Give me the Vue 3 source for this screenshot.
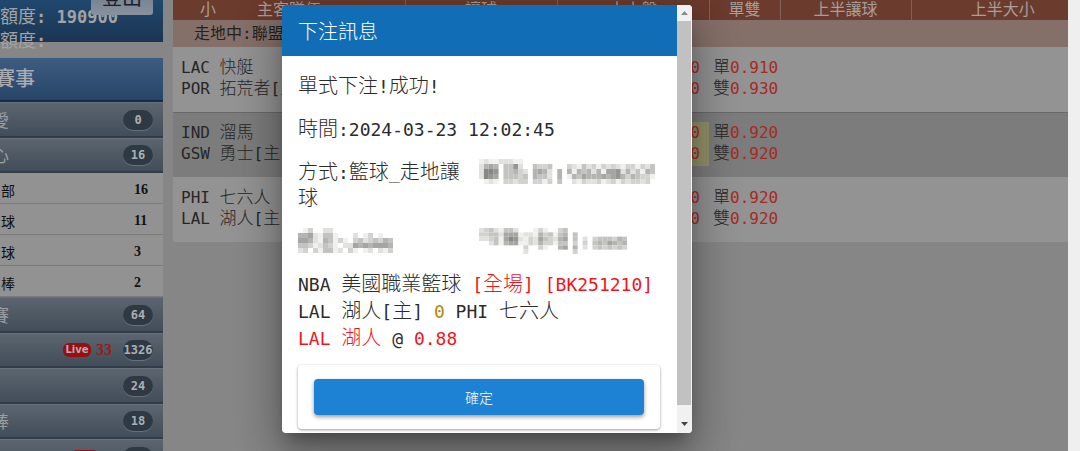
<script setup>
import { h } from 'vue'

/* Sets Latin runs in the monospaced face and CJK runs in the CJK face. */
const Mix = ({ text }) =>
  text
    .split(/([\u2e80-\u9fff]+)/)
    .filter(Boolean)
    .map((run) => h('span', { class: /[\u2e80-\u9fff]/.test(run) ? 'cjk' : 'latin' }, run))
Mix.props = ['text']

const menuTop = [
  { name: '愛', count: '0' },
  { name: '心', count: '16' },
]
const subMenu = [
  { name: '部', count: '16' },
  { name: '球', count: '11' },
  { name: '球', count: '3' },
  { name: '棒', count: '2' },
]
const menuBottom = [
  { name: '賽', count: '64' },
  { name: '', count: '1326', live: '33' },
  { name: '', count: '24' },
  { name: '棒', count: '18' },
  { name: '', count: '', live: '\u2007' },
]
const games = [
  { away: 'LAC 快艇', home: 'POR 拓荒者[主]', odd: '0.910', even: '0.930' },
  { away: 'IND 溜馬', home: 'GSW 勇士[主]', odd: '0.920', even: '0.920', alt: true },
  { away: 'PHI 七六人', home: 'LAL 湖人[主]', odd: '0.920', even: '0.920' },
]

/* Pixelated masks: each digit is the darkness of one cell. */
const masks = {
  order: [
    '121122211000000000000000000000000000',
    '256504472004334000321423132321331324',
    '288704453205652050515452516672524154',
    '287604443405442050154655565675354331',
    '012103323303313040021322312313233230',
  ],
  stake: [
    '0130022000000000000',
    '5562144100020130100',
    '6652154131034234354',
    '4431243102265656665',
    '2303144120310120213',
  ],
  payout: [
    '234214420001310034000000000000',
    '334426661221534145040000000000',
    '223416872132643256040203444354',
    '002415661132533144030304546545',
    '000000000300310056050203434343',
    '000000000200000000030000000000',
  ],
}
const cells = (rows) =>
  rows.flatMap((row, y) =>
    [...row].map((d, x) => ({ x: x * 5, y: y * 5, d: Number(d) })).filter((c) => c.d > 0)
  )
const shade = (d) => {
  const v = 255 - d * 15
  return `rgb(${v},${v},${v - 2})`
}
</script>

<template>
  <div class="screen">
    <aside class="sidebar">
      <section class="account">
        <p><Mix text="額度: 190900" /></p>
        <p><Mix text="額度:" /></p>
        <button class="logout" type="button">登出</button>
      </section>
      <h2 class="side-title">賽事</h2>
      <nav>
        <a v-for="m in menuTop" :key="m.name" class="item" href="#">
          <span class="name">{{ m.name }}</span>
          <span class="badge">{{ m.count }}</span>
        </a>
        <a v-for="(m, i) in subMenu" :key="'s' + i" class="sub" href="#">
          <span>{{ m.name }}</span>
          <b>{{ m.count }}</b>
        </a>
        <a v-for="(m, i) in menuBottom" :key="'b' + i" class="item" href="#">
          <span class="name">{{ m.name }}</span>
          <span v-if="m.live" class="live">Live</span>
          <span v-if="m.live" class="live-count">{{ m.live }}</span>
          <span class="badge">{{ m.count }}</span>
        </a>
      </nav>
    </aside>

    <main class="board">
      <table>
        <colgroup>
          <col class="c-team" /><col class="c-line" /><col class="c-line" />
          <col class="c-parity" /><col class="c-half" /><col />
        </colgroup>
        <thead>
          <tr>
            <th class="team-head"><span>小</span><span>主客隊伍</span></th>
            <th>讓球</th>
            <th>大小盤</th>
            <th>單雙</th>
            <th>上半讓球</th>
            <th class="last">上半大小</th>
          </tr>
        </thead>
        <tbody>
          <tr class="league">
            <td colspan="6"><Mix text="走地中:聯盟" /></td>
          </tr>
          <tr v-for="g in games" :key="g.away" class="game" :class="{ alt: g.alt }">
            <td class="team">
              <div><Mix :text="g.away" /></div>
              <div><Mix :text="g.home" /></div>
            </td>
            <td></td>
            <td class="total"><div class="picks"><div>0</div><div>0</div></div></td>
            <td class="parity">
              <div><span class="cjk">單</span><span class="price">{{ g.odd }}</span></div>
              <div><span class="cjk">雙</span><span class="price">{{ g.even }}</span></div>
            </td>
            <td></td>
            <td></td>
          </tr>
        </tbody>
      </table>
    </main>
    <div class="page-track"></div>

    <div class="dialog" role="dialog" aria-labelledby="dialog-title">
      <div class="dialog-main">
        <h1 id="dialog-title">下注訊息</h1>
        <div class="dialog-body">
          <p><Mix text="單式下注!成功!" /></p>
          <p><Mix text="時間:2024-03-23 12:02:45" /></p>
          <div class="pair">
            <p><Mix text="方式:籃球_走地讓球" /></p>
            <svg class="mask" width="176" height="25" viewBox="0 0 180 25" preserveAspectRatio="none" aria-hidden="true">
              <rect v-for="(c, i) in cells(masks.order)" :key="i" :x="c.x" :y="c.y" width="5" height="5" :fill="shade(c.d)" />
            </svg>
          </div>
          <div class="pair">
            <svg class="mask" width="95" height="25" viewBox="0 0 95 25" aria-hidden="true">
              <rect v-for="(c, i) in cells(masks.stake)" :key="i" :x="c.x" :y="c.y" width="5" height="5" :fill="shade(c.d)" />
            </svg>
            <svg class="mask" width="148" height="26" viewBox="0 0 150 30" preserveAspectRatio="none" aria-hidden="true">
              <rect v-for="(c, i) in cells(masks.payout)" :key="i" :x="c.x" :y="c.y" width="5" height="5" :fill="shade(c.d)" />
            </svg>
          </div>
          <div class="bet">
            <div><Mix text="NBA 美國職業籃球 " /><span class="red"><Mix text="[全場] [BK251210]" /></span></div>
            <div><Mix text="LAL 湖人[主] " /><span class="gold"><Mix text="0" /></span><Mix text=" PHI 七六人" /></div>
            <div><span class="red"><Mix text="LAL 湖人" /></span><Mix text=" @ " /><span class="red"><Mix text="0.88" /></span></div>
          </div>
          <div class="actions"><button type="button">確定</button></div>
        </div>
      </div>
      <div class="scrollbar" aria-hidden="true">
        <svg width="14" height="16" viewBox="0 0 14 16"><path d="M4 10h7L7.500 6z" fill="#8b8b8b" /></svg>
        <div class="thumb"></div>
        <svg width="14" height="28" viewBox="0 0 14 28"><path d="M4 17h7l-3.500 4z" fill="#444" /></svg>
      </div>
    </div>
  </div>
</template>

<style>
body {
  margin: 0;
  background: #868686;
}
.latin {
  font-family: "DejaVu Sans Mono", "Liberation Mono", monospace;
  font-size: 18px;
  line-height: 1;
  white-space: pre-wrap;
}
.cjk {
  font-family: "Noto Sans CJK TC", sans-serif;
  font-weight: 300;
  line-height: 1;
}
</style>

<style scoped>
.screen {
  position: relative;
  display: flex;
  gap: 10px;
  height: 100vh;
  overflow: hidden;
  background: #868686;
  font-family: "DejaVu Sans Mono", "Noto Sans CJK TC", monospace;
}
p, h1, h2 {
  margin: 0;
}
a {
  color: inherit;
  text-decoration: none;
}

.sidebar {
  flex: 0 0 163px;
  overflow: hidden;
}
.account {
  position: relative;
  box-sizing: border-box;
  height: 42px;
  padding-top: 5px;
  margin-bottom: 16px;
  background: linear-gradient(#20486f, #1b3552);
  color: #a3a3a3;
  font-size: 18px;
  line-height: 24px;
}
.account p {
  height: 24px;
  white-space: nowrap;
}
.account :deep(.latin) {
  font-size: 17px;
  font-weight: bold;
}
.account :deep(.cjk) {
  font-weight: 400;
}
.logout {
  position: absolute;
  top: -15px;
  left: 91px;
  width: 62px;
  height: 30px;
  padding: 0 0 6px;
  border: 0;
  border-radius: 3px;
  background: linear-gradient(#6d7785, #8791a0);
  color: #17202e;
  font: 20px/24px "Noto Sans CJK TC", sans-serif;
}
.side-title {
  height: 42px;
  border-bottom: 2px solid #162c45;
  background: linear-gradient(#3d5c80, #264567);
  color: #a6acb2;
  font: 500 20px/40px "Noto Sans CJK TC", sans-serif;
  text-indent: -5px;
}
.item {
  display: flex;
  align-items: center;
  box-sizing: border-box;
  height: 36px;
  padding-right: 10px;
  border-top: 1px solid #68717b;
  border-bottom: 2px solid #323c47;
  background: linear-gradient(#5c656f, #414d59);
  color: #9b9fa3;
}
.item:nth-child(even) {
  height: 35px;
}
.name {
  flex: 1;
  font: 17px/24px "Noto Sans CJK TC", sans-serif;
  text-indent: -8px;
}
.badge {
  flex: 0 0 30px;
  height: 20px;
  border-radius: 10px;
  background: #2e3944;
  box-shadow: 0 1px 0 #66707a;
  color: #abafb3;
  font-size: 12px;
  font-weight: bold;
  line-height: 20px;
  text-align: center;
}
.live {
  width: 28px;
  height: 14px;
  margin-right: 5px;
  border-radius: 6px;
  background: #960f12;
  color: #b9a9a9;
  font: bold 10px/14px "DejaVu Sans", sans-serif;
  text-align: center;
}
.live-count {
  margin-right: 11px;
  color: #961c1f;
  font: bold 16px/20px "Liberation Serif", serif;
}
.sub {
  display: flex;
  justify-content: space-between;
  box-sizing: border-box;
  height: 31px;
  border-bottom: 1px solid #7b7b7b;
  background: #929292;
  color: #111;
  font: 14px/34px "Noto Sans CJK TC", sans-serif;
}
.sub span {
  padding-left: 1px;
}
.sub b {
  width: 29px;
  font: bold 14px/34px "Liberation Serif", serif;
}

.board {
  flex: 1;
}
table {
  width: 100%;
  border-collapse: collapse;
  table-layout: fixed;
}
.c-team { width: 232px; }
.c-line { width: 152px; }
.c-parity { width: 71px; }
.c-half { width: 131px; }
th {
  height: 20px;
  padding: 0;
  border-right: 1px solid #806159;
  background: #6b3b2d;
  color: #a89e9a;
  font: 16px/16px "Noto Sans CJK TC", sans-serif;
  vertical-align: top;
}
th.last {
  padding-left: 26px;
  border-right: 0;
}
.team-head {
  padding-left: 27px;
  text-align: left;
}
.team-head span + span {
  margin-left: 41px;
}
td {
  padding: 0;
  vertical-align: top;
}
.league td {
  height: 25px;
  padding-left: 21px;
  background: #857069;
  color: #222;
  font-size: 16px;
  line-height: 27px;
}
.league :deep(.cjk) {
  font-weight: 400;
}
.game {
  height: 65px;
  background: #939393;
  color: #262626;
  font-size: 17px;
  line-height: 21px;
}
.game.alt {
  background: #7c7c7c;
  box-shadow: inset 0 1px 0 #696969;
}
.team {
  padding: 10px 0 0 8px;
  white-space: nowrap;
}
.board div {
  height: 21px;
}
.board :deep(.latin),
.price,
.picks {
  font-size: 16px;
}
.price {
  line-height: 1;
}
.price,
.picks {
  color: #a72a22;
}
.total {
  padding-top: 10px;
}
.board .picks {
  height: 44px;
  padding-right: 9px;
  text-align: right;
}
.alt .picks {
  background: #92926a;
}
.parity {
  padding: 10px 0 0 4px;
  white-space: nowrap;
}
.page-track {
  width: 12px;
  margin-left: -10px;
  background: #efefef;
}

.dialog {
  position: absolute;
  top: 5px;
  left: 282px;
  display: flex;
  width: 410px;
  overflow: hidden;
  border-radius: 4px;
  background: #fff;
  box-shadow: 0 11px 15px -7px rgba(0, 0, 0, 0.3), 0 24px 38px 3px rgba(0, 0, 0, 0.2),
    0 9px 46px 8px rgba(0, 0, 0, 0.16);
  color: #2b2b2b;
  font-size: 20px;
  line-height: 26px;
}
.dialog-main {
  flex: 1;
}
h1 {
  height: 51px;
  padding-left: 16px;
  background: #106db6;
  color: #fff;
  font: 300 20px/51px "Noto Sans CJK TC", sans-serif;
}
.dialog-body {
  display: flex;
  flex-direction: column;
  gap: 17px;
  padding: 17px 17px 4px 16px;
}
.pair {
  display: grid;
  grid-template-columns: 1fr 1fr;
}
.mask {
  display: block;
}
.bet {
  white-space: nowrap;
}
.bet div {
  height: 27px;
  line-height: 27px;
}
.red {
  color: #f0151b;
}
.gold {
  color: #b8860b;
}
.actions {
  padding: 14px 16px;
  margin-top: -4px;
  border-radius: 4px;
  box-shadow: 0 1px 3px rgba(0, 0, 0, 0.4);
}
.actions button {
  display: block;
  width: 100%;
  height: 36px;
  border: 0;
  border-radius: 4px;
  background: #1e82d4;
  box-shadow: 0 2px 4px rgba(0, 0, 0, 0.4);
  color: #fff;
  font: 300 14px/34px "Noto Sans CJK TC", sans-serif;
}
.scrollbar {
  display: flex;
  flex-direction: column;
  width: 14px;
  padding-right: 1px;
  background: #f1f1f1;
}
.scrollbar svg {
  flex: none;
}
.thumb {
  flex: 1;
  background: #c1c1c1;
}
</style>
